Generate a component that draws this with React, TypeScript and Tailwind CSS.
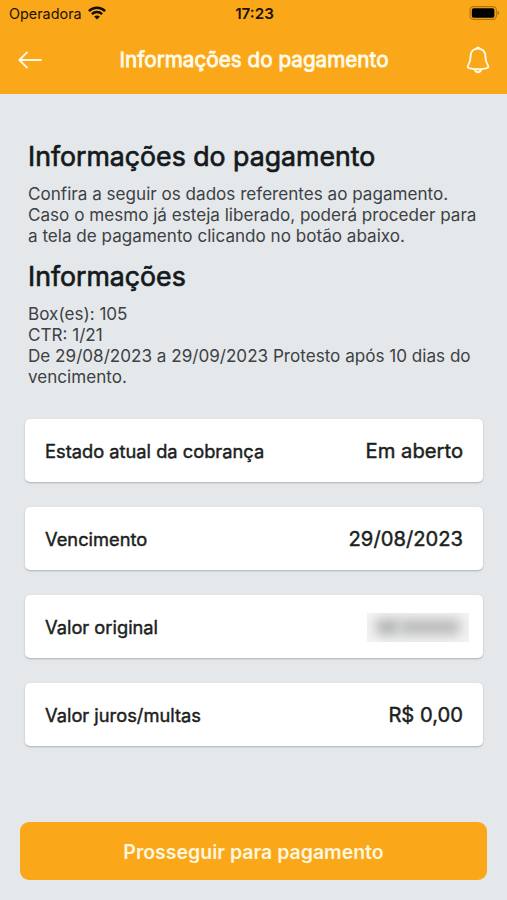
import type { ReactNode } from 'react';

interface Charge {
  label: string;
  value: string;
  hidden?: boolean;
}

const CHARGES: Charge[] = [
  { label: 'Estado atual da cobrança', value: 'Em aberto' },
  { label: 'Vencimento', value: '29/08/2023' },
  { label: 'Valor original', value: '', hidden: true },
  { label: 'Valor juros/multas', value: 'R$ 0,00' },
];

function WifiIcon() {
  return (
    <svg width="18" height="14" viewBox="0 0 18 14" fill="none" stroke="#120c02" strokeWidth="2.5">
      <path d="M0.9 5.1C5.5 0.7 12.5 0.7 17.1 5.1" />
      <path d="M3.9 8.2C6.8 5.4 11.2 5.4 14.1 8.2" />
      <path d="M9 13.4L6.1 10.5C7.7 9 10.3 9 11.9 10.5Z" fill="#120c02" stroke="none" />
    </svg>
  );
}

function BatteryIcon() {
  return (
    <svg width="31" height="14" viewBox="0 0 31 14" fill="none">
      <rect x="1" y="0.6" width="26.4" height="12.8" rx="3.6" stroke="#b0740f" strokeWidth="1.1" />
      <rect x="2.8" y="2.2" width="22.6" height="9.6" rx="1.8" fill="#000" />
      <path d="M28.6 4.8V9.2C30.8 8.5 30.8 5.5 28.6 4.8Z" fill="#b0740f" />
    </svg>
  );
}

function ArrowIcon() {
  return (
    <svg width="24" height="18" viewBox="0 0 24 18" fill="none" stroke="#fff8e6" strokeWidth="1.9" strokeLinecap="round" strokeLinejoin="round">
      <path d="M23 9H1.4M9 1.4L1.4 9L9 16.6" />
    </svg>
  );
}

function BellIcon() {
  return (
    <svg width="24" height="28" viewBox="0 0 24 28" fill="none" stroke="#fff8e6" strokeWidth="1.9" strokeLinejoin="round" strokeLinecap="round">
      <path d="M12 2.6C7.4 2.6 4.6 5.8 4.6 10.2C4.6 14.6 3.8 16.6 2.3 18.9C1.1 20.9 1.7 21.7 3.4 22.2C5.9 22.8 7.5 23.1 8.8 23.2C9.3 25.3 10.4 26.2 12 26.2C13.6 26.2 14.7 25.3 15.2 23.2C16.5 23.1 18.1 22.8 20.6 22.2C22.3 21.7 22.9 20.9 21.7 18.9C20.2 16.6 19.4 14.6 19.4 10.2C19.4 5.8 16.6 2.6 12 2.6Z" />
      <path d="M8.8 23.2H15.2" />
      <path d="M10.6 2.4C10.9 1.4 13.1 1.4 13.4 2.4" />
    </svg>
  );
}

function Heading({ children }: { children: ReactNode }) {
  return (
    <h2 className="text-[26.7px] leading-8 text-[#15191c] [-webkit-text-stroke:0.7px_#15191c]">{children}</h2>
  );
}

function ChargeCard({ label, value, hidden }: Charge) {
  return (
    <div className="flex h-[63px] items-center justify-between rounded-[5px] bg-white px-5 text-[#1c1f21] shadow-[0_1px_2px_rgba(0,0,0,0.24)]">
      <span className="pt-[3px] text-[18.3px] [-webkit-text-stroke:0.45px_#1c1f21]">{label}</span>
      {hidden ? (
        <div className="-mr-1.5 mt-0.5 flex h-[29px] w-[102px] items-center justify-center overflow-hidden bg-[#f3f3f3]">
          <div className="h-4 w-6 rounded bg-[#b2b4b4] blur-[6px]" />
          <div className="h-4 w-15 rounded bg-[#b9baba] blur-[6px]" />
        </div>
      ) : (
        <span className="pt-[3px] text-[20.2px] [-webkit-text-stroke:0.45px_#1c1f21]">{value}</span>
      )}
    </div>
  );
}

export default function App() {
  return (
    <div className="flex h-[900px] w-[507px] flex-col overflow-hidden bg-[#e4e8eb] font-['Inter',sans-serif]">
      <header className="h-[94px] bg-[#faa81a]">
        <div className="grid h-[26px] grid-cols-3 items-center pl-[9px] pr-[7px] text-[#1c1303]">
          <div className="flex items-center gap-1.5">
            <span className="pt-0.5 text-[14.4px]">Operadora</span>
            <WifiIcon />
          </div>
          <span className="pt-0.5 text-center text-[15.2px] font-semibold">17:23</span>
          <div className="flex justify-end">
            <BatteryIcon />
          </div>
        </div>
        <div className="flex h-[68px] items-center justify-between pl-[18px] pr-[17px]">
          <ArrowIcon />
          <h1 className="text-[20.7px] text-[#fffbea] [-webkit-text-stroke:0.8px_#fffbea]">Informações do pagamento</h1>
          <BellIcon />
        </div>
      </header>

      <main className="px-7 pt-[46px] text-[17.1px] leading-[20.8px] text-[#3d4144]">
        <Heading>Informações do pagamento</Heading>
        <p className="mt-3">
          Confira a seguir os dados referentes ao pagamento.
          <br />
          Caso o mesmo já esteja liberado, poderá proceder para
          <br />a tela de pagamento clicando no botão abaixo.
        </p>
        <div className="mt-3.5">
          <Heading>Informações</Heading>
        </div>
        <p className="mt-3">
          Box(es): 105
          <br />
          CTR: 1/21
          <br />
          De 29/08/2023 a 29/09/2023 Protesto após 10 dias do
          <br />
          vencimento.
        </p>
      </main>

      <section className="mt-[31px] flex flex-col gap-[25px] pl-[25px] pr-6">
        {CHARGES.map((charge) => (
          <ChargeCard key={charge.label} {...charge} />
        ))}
      </section>

      <footer className="mb-5 mt-auto px-5">
        <button className="h-[58px] w-full rounded-[9px] bg-[#faa81a] pt-1 text-[19.5px] font-semibold text-[#fff6df]">
          Prosseguir para pagamento
        </button>
      </footer>
    </div>
  );
}
